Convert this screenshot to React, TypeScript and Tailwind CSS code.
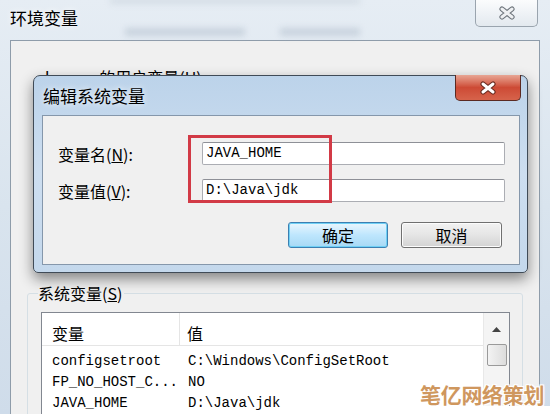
import React from "react";

function XGlyph({ light, dark, w = 18, h = 14 }: { light: string; dark: string; w?: number; h?: number }) {
  return (
    <svg width={w} height={h} viewBox="0 0 18 14">
      <path d="M4 3 L14 11 M14 3 L4 11" stroke={dark} strokeWidth="5.2" strokeLinecap="round" fill="none" />
      <path d="M4 3 L14 11 M14 3 L4 11" stroke={light} strokeWidth="3" strokeLinecap="round" fill="none" />
    </svg>
  );
}

const cjk = "font-['Microsoft_YaHei','Noto_Sans_CJK_SC','Noto_Sans',sans-serif]";
const mono = "font-['Liberation_Mono','Noto_Sans_CJK_SC',monospace]";

export default function App() {
  const rows = [
    ["configsetroot", "C:\\Windows\\ConfigSetRoot"],
    ["FP_NO_HOST_C...", "NO"],
    ["JAVA_HOME", "D:\\Java\\jdk"],
  ];
  return (
    <div className={`relative w-[550px] h-[414px] overflow-hidden bg-gradient-to-b from-[#e6edf4] via-[#d9e4ee] to-[#cfdcea] text-black ${cjk}`}>
      {/* blurred glass reflections */}
      <div className="absolute left-[125px] top-[28px] w-[120px] h-[8px] bg-[#b7c3d0] blur-[3px] opacity-60" />
      <div className="absolute left-[280px] top-[28px] w-[80px] h-[8px] bg-[#b7c3d0] blur-[3px] opacity-60" />
      <div className="absolute left-[110px] top-[-2px] w-[250px] h-[6px] bg-[#c2ccd6] blur-[3px] opacity-50" />

      {/* outer title bar */}
      <div className="flex h-[40px] justify-between">
        <div className="pl-[10px] pt-[8px] text-[17px] leading-[20px] [text-shadow:0_0_6px_#fff]">环境变量</div>
        <div className="mr-[12px] flex h-[27px] w-[63px] items-center justify-center rounded-b-[5px] border border-t-0 border-[#9aa4ae] bg-gradient-to-b from-[#fbfcfd] to-[#e3e9ef]">
          <XGlyph light="#eef0f2" dark="#6d747b" />
        </div>
      </div>

      {/* outer client area */}
      <div className="mx-[10px] h-[380px] border border-[#8e9caa] bg-[#f0f0f0] pt-[26px]">
        <div className="pl-[34px] text-[16px] leading-[20px]">lenovo 的用户变量(<span className="underline">U</span>)</div>

        <div className="relative mx-[16px] mt-[206px] h-[200px] rounded-[3px] border border-[#d5dfe5]">
          <div className="absolute left-[10px] top-[-11px] bg-[#f0f0f0] pr-[2px] text-[16px] leading-[20px]">
            系统变量(<span className="underline">S</span>)
          </div>
          <div className="ml-[13px] mr-[12px] mt-[18px] flex h-[120px] border border-[#828790] bg-white">
            <div className="flex-1">
              <div className="flex h-[33px] border-b border-[#e5e5e5] text-[16px] leading-[20px]">
                <div className="w-[138px] border-r border-[#e5e5e5] pl-[10px] pt-[10px]">变量</div>
                <div className="pl-[7px] pt-[10px]">值</div>
              </div>
              <div className={`pt-[5px] text-[14px] ${mono}`}>
                {rows.map(([n, v]) => (
                  <div key={n} className="flex h-[21px] items-center">
                    <div className="w-[139px] pl-[10px] whitespace-pre">{n}</div>
                    <div className="pl-[7px] whitespace-pre">{v}</div>
                  </div>
                ))}
              </div>
            </div>
            <div className="flex w-[26px] flex-col items-center border-l border-[#e8e8e8] bg-[#f4f4f4]">
              <div className="flex h-[31px] items-center justify-center pt-[2px]">
                <svg width="9" height="5" viewBox="0 0 9 5">
                  <path d="M0 5 L4.5 0 L9 5 Z" fill="#444" />
                </svg>
              </div>
              <div className="h-[22px] w-[20px] rounded-[2px] border border-[#9a9a9a] bg-gradient-to-r from-[#f3f3f3] to-[#dcdcdc]" />
            </div>
          </div>
        </div>
      </div>

      {/* edit dialog window */}
      <div className="absolute left-[33px] top-[75px] flex h-[198px] w-[495px] flex-col rounded-t-[7px] rounded-b-[5px] border border-[#404b57] bg-gradient-to-b from-[#bcd3ea] via-[#cddef0] to-[#c4d8ec] shadow-[0_6px_14px_rgba(0,0,0,0.45)]">
        <div className="absolute right-[6px] top-[-1px] flex h-[26px] w-[66px] items-center justify-center rounded-b-[5px] border border-t-0 border-[#5b2a22] bg-gradient-to-b from-[#e7a594] via-[#cd4a35] to-[#d6634b]">
          <XGlyph light="#ffffff" dark="#6a2b20" />
        </div>
        <div className="h-[39px] pl-[9px] pt-[10px] text-[17px] leading-[20px] [text-shadow:0_0_6px_#fff]">编辑系统变量</div>
        <div className="mb-[7px] ml-[8px] mr-[7px] flex-1 border border-[#8597ab] bg-[#f0f0f0] pt-[26px]">
          <div className="flex h-[23px] items-center">
            <div className="w-[159px] pl-[15px] text-[16px] leading-[20px]">变量名(<span className="underline">N</span>):</div>
            <div className={`flex h-[23px] w-[303px] items-center rounded-[2px] border border-[#abadb3] border-t-[#8e9097] bg-white pl-[3px] text-[14px] ${mono}`}>JAVA_HOME</div>
          </div>
          <div className="mt-[14px] flex h-[23px] items-center">
            <div className="w-[159px] pl-[15px] text-[16px] leading-[20px]">变量值(<span className="underline">V</span>):</div>
            <div className={`flex h-[23px] w-[303px] items-center rounded-[2px] border border-[#abadb3] border-t-[#8e9097] bg-white pl-[3px] text-[14px] ${mono}`}>D:\Java\jdk</div>
          </div>
          <div className="mt-[20px] flex justify-end gap-[13px] pr-[17px]">
            <div className="flex h-[26px] w-[100px] items-center justify-center rounded-[3px] border border-[#3c7fb1] bg-gradient-to-b from-[#eaf6fd] via-[#bee6fd] to-[#a7d9f5] text-[16px] shadow-[inset_0_0_0_1px_#6fd0f5]">
              确定
            </div>
            <div className="flex h-[26px] w-[101px] items-center justify-center rounded-[3px] border border-[#707070] bg-gradient-to-b from-[#f2f2f2] via-[#e5e5e5] to-[#d3d3d3] text-[16px] shadow-[inset_0_0_0_1px_#fcfcfc]">
              取消
            </div>
          </div>
        </div>
      </div>

      {/* red annotation box */}
      <div className="absolute left-[188px] top-[135px] h-[68px] w-[144px] border-[3px] border-[#d23a46]" />

      {/* watermark */}
      <div className="absolute left-[382px] top-[406px] h-[8px] w-[168px] bg-white" />
      <div className="absolute left-[420px] top-[381px] text-[21px] font-bold leading-[26px] tracking-[-0.3px] text-[#cf975e] [text-shadow:1px_1px_0_#fff,-1px_-1px_0_#fff,1px_-1px_0_#fff,-1px_1px_0_#fff,0_0_3px_#fff]">
        笔亿网络策划
      </div>
    </div>
  );
}
